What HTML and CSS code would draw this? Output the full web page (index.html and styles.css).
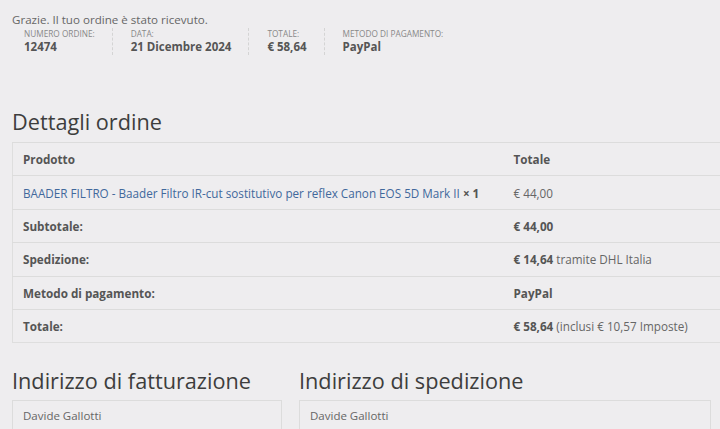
FILE: index.html
```html
<!DOCTYPE html>
<html lang="it">
<head>
    <meta charset="UTF-8">
    <meta name="viewport" content="width=device-width, initial-scale=1.0">
    <title>Ordine ricevuto</title>
    <link rel="stylesheet" href="styles.css">
</head>
<body>
    <div class="page">
        <p class="thanks">Grazie. Il tuo ordine è stato ricevuto.</p>
        <ul class="overview">
            <li>Numero ordine:<strong>12474</strong></li>
            <li>Data:<strong>21 Dicembre 2024</strong></li>
            <li>Totale:<strong>€ 58,64</strong></li>
            <li>Metodo di pagamento:<strong>PayPal</strong></li>
        </ul>

        <h2 class="title">Dettagli ordine</h2>
        <table class="details">
            <thead>
                <tr>
                    <th class="col-name">Prodotto</th>
                    <th>Totale</th>
                </tr>
            </thead>
            <tbody>
                <tr>
                    <td><a href="#">BAADER FILTRO - Baader Filtro IR-cut sostitutivo per reflex Canon EOS 5D Mark II</a> <strong class="qty">× 1</strong></td>
                    <td>€ 44,00</td>
                </tr>
            </tbody>
            <tfoot>
                <tr>
                    <th>Subtotale:</th>
                    <td><strong>€ 44,00</strong></td>
                </tr>
                <tr>
                    <th>Spedizione:</th>
                    <td><strong>€ 14,64</strong> tramite DHL Italia</td>
                </tr>
                <tr>
                    <th>Metodo di pagamento:</th>
                    <td><strong>PayPal</strong></td>
                </tr>
                <tr>
                    <th>Totale:</th>
                    <td><strong>€ 58,64</strong> (inclusi € 10,57 Imposte)</td>
                </tr>
            </tfoot>
        </table>

        <div class="addresses">
            <div class="address">
                <h2 class="title small">Indirizzo di fatturazione</h2>
                <div class="box">Davide Gallotti</div>
            </div>
            <div class="address">
                <h2 class="title small">Indirizzo di spedizione</h2>
                <div class="box">Davide Gallotti</div>
            </div>
        </div>
    </div>
</body>
</html>
```

FILE: styles.css
```css
*{
    padding: 0;
    margin: 0;
    box-sizing: border-box;
    list-style: none;
}
html{
    background-color: #eeedef;
    color: #666;
    font-family: "Open Sans", "Liberation Sans", sans-serif;
}
body{
    overflow: hidden;
}
.page{
    width: 740px;
    padding: 12px 12px 0;
}
.thanks{
    font-size: 11.6px;
    line-height: 16px;
    color: #666;
}
.overview{
    display: flex;
    padding-left: 12px;
}
.overview li{
    display: flex;
    flex-direction: column;
    padding: 0 17px 0 18px;
    border-right: 1px dashed #d4d4d4;
    font-size: 8.25px;
    line-height: 11px;
    text-transform: uppercase;
    color: #888;
}
.overview li:first-child{
    padding-left: 0;
}
.overview li:last-child{
    border-right: 0;
}
.overview strong{
    font-size: 11.5px;
    line-height: 16px;
    text-transform: none;
    color: #555;
}
.title{
    margin-top: 53px;
    font-size: 21.7px;
    font-weight: 400;
    line-height: 28px;
    color: #3d3d3d;
}
.details{
    width: 100%;
    margin-top: 6px;
    border-collapse: collapse;
    border: 1px solid #dedede;
    font-size: 11.7px;
}
.details th, .details td{
    height: 33.4px;
    padding: 0 10px;
    text-align: left;
    border-top: 1px solid #dcdcdc;
}
.details th{
    font-weight: 700;
    color: #555;
}
.details .col-name{
    width: 491px;
}
.details a{
    color: #41689c;
    text-decoration: none;
}
.details strong{
    color: #555;
}
.addresses{
    display: grid;
    grid-template-columns: 270px 412px;
    column-gap: 17px;
}
.title.small{
    margin-top: 24px;
}
.box{
    margin-top: 5px;
    padding: 8px 10px;
    border: 1px solid #dcdcdc;
    border-bottom: 0;
    font-size: 11.5px;
    line-height: 14px;
    height: 40px;
}
```
